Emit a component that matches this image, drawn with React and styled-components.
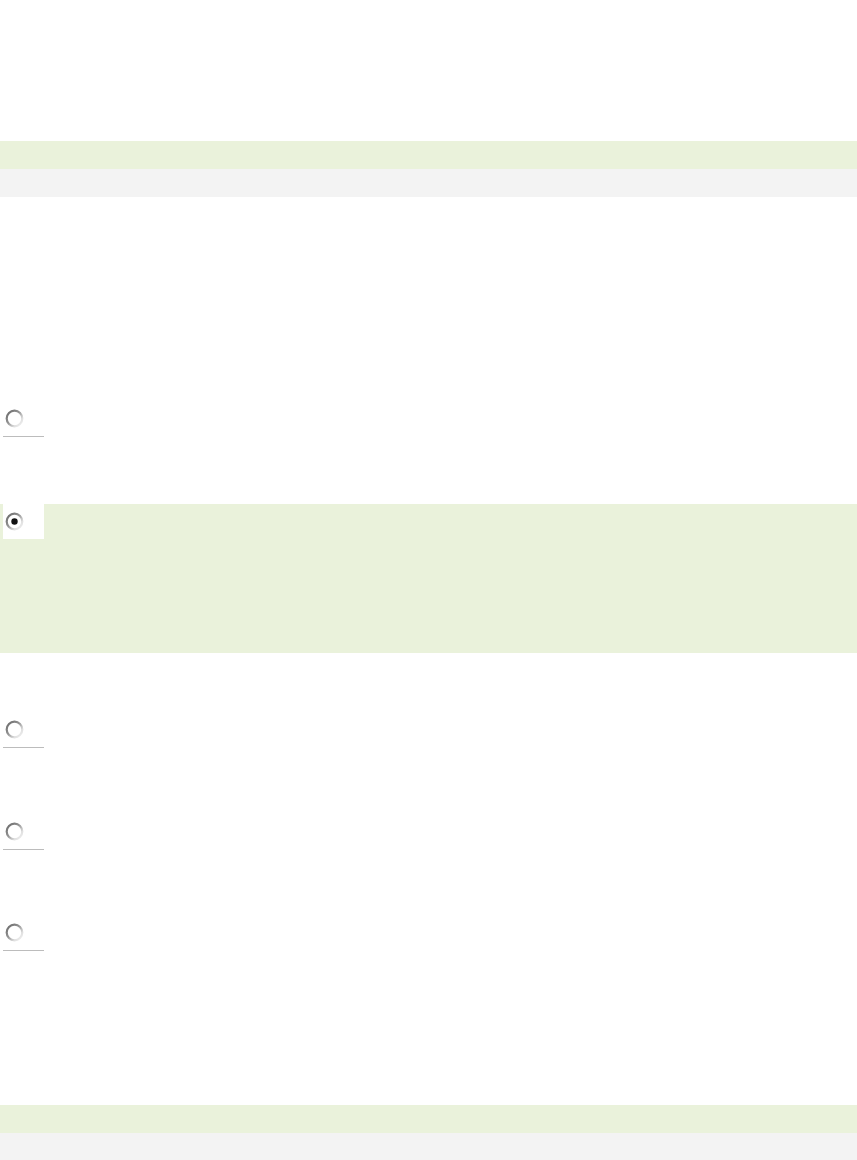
import React from "react";
import styled, { createGlobalStyle } from "styled-components";

const Global = createGlobalStyle`
  html, body { margin: 0; padding: 0; background: #ffffff; }
  body { font-family: "Liberation Sans", Arial, sans-serif; }
`;

const Page = styled.div`
  width: 857px;
  min-height: 1160px;
  display: flex;
  flex-direction: column;
`;

const Band = styled.div`
  height: 28px;
  background: ${(p) => (p.$tone === "green" ? "#eaf2db" : "#f3f3f3")};
`;

const Header = styled.div`
  padding-top: 141px;
  display: flex;
  flex-direction: column;
`;

const Options = styled.div`
  margin-top: 205px;
  display: flex;
  flex-direction: column;
`;

const Option = styled.div`
  background: ${(p) => (p.$selected ? "#eaf2db" : "transparent")};
  height: ${(p) => p.$h}px;
  margin-bottom: ${(p) => p.$after}px;
`;

const Cell = styled.div`
  margin-left: 3px;
  width: 41px;
  height: 35px;
  box-sizing: border-box;
  background: #ffffff;
  border-bottom: 1px solid ${(p) => (p.$selected ? "#ffffff" : "#bcbcbc")};
  padding-left: 2px;
  display: flex;
  align-items: flex-start;
`;

const RadioBox = styled.div`
  margin-top: ${(p) => (p.$selected ? 8 : 7)}px;
  width: 19px;
  height: 19px;
`;

const Footer = styled.div`
  margin-top: 154px;
  display: flex;
  flex-direction: column;
`;

function Radio({ selected, id }) {
  return (
    <RadioBox $selected={selected}>
      <svg width="19" height="19" viewBox="0 0 19 19">
        <defs>
          <linearGradient id={`g${id}`} x1="0" y1="0" x2="1" y2="1">
            <stop offset="0" stopColor="#666666" />
            <stop offset="0.45" stopColor="#959595" />
            <stop offset="0.75" stopColor="#e0e0e0" />
            <stop offset="1" stopColor="#f2f2f2" />
          </linearGradient>
        </defs>
        <circle cx="9.5" cy="9.5" r="7.8" fill="#ffffff" stroke={`url(#g${id})`} strokeWidth="2.2" />
        {selected && <circle cx="9.5" cy="9.5" r="3.2" fill="#111111" />}
      </svg>
    </RadioBox>
  );
}

const items = [
  { h: 102, after: 0 },
  { h: 149, after: 60, selected: true },
  { h: 102, after: 0 },
  { h: 101, after: 0 },
  { h: 35, after: 0 },
];

export default function App() {
  return (
    <Page>
      <Global />
      <Header>
        <Band $tone="green" />
        <Band $tone="gray" />
      </Header>
      <Options>
        {items.map((it, i) => (
          <Option key={i} $selected={it.selected} $h={it.h} $after={it.after}>
            <Cell $selected={it.selected}>
              <Radio selected={it.selected} id={i} />
            </Cell>
          </Option>
        ))}
      </Options>
      <Footer>
        <Band $tone="green" />
        <Band $tone="gray" />
      </Footer>
    </Page>
  );
}
